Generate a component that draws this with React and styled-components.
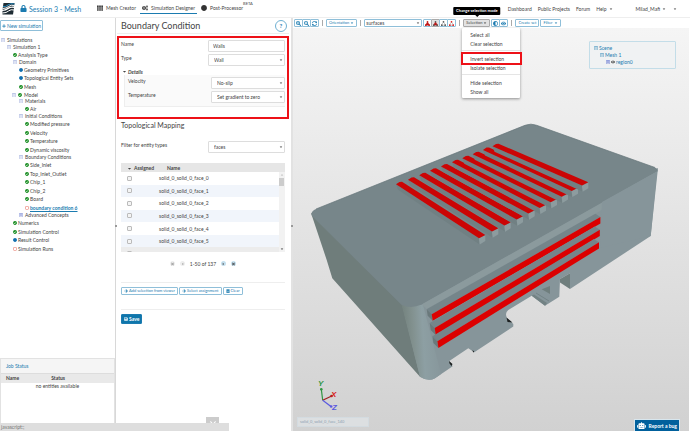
import React from 'react';
import styled, { createGlobalStyle, css } from 'styled-components';
import {
    FaLock, FaTh, FaCogs, FaCircle, FaRegCircle, FaCheckCircle, FaPlus, FaSearchPlus, FaSearchMinus,
    FaSyncAlt, FaEye, FaArrowRight, FaTrashAlt, FaSave, FaCaretDown, FaStepBackward, FaStepForward,
    FaCaretLeft, FaCaretRight, FaRobot, FaChevronDown, FaRegMinusSquare, FaRegPlusSquare, FaAdjust,
} from 'react-icons/fa';

const blue = '#1b7bb0';
const red = '#ed1118';

const GlobalStyle = createGlobalStyle`
    * {
        box-sizing: border-box;
    }

    body {
        margin: 0;
        overflow: hidden;
        background: #fff;
        color: #444;
        font: 5px/6px Lato, "Open Sans", sans-serif;
    }

    button, input, select {
        font: inherit;
        color: inherit;
    }

    button {
        cursor: pointer;
    }

    a {
        color: inherit;
        text-decoration: none;
    }
`;

const Page = styled.div`
    display: flex;
    flex-direction: column;
    height: 100vh;
`;

/* ---------- header ---------- */

const Header = styled.header`
    display: flex;
    flex: none;
    height: 18px;
    padding: 0 13px 0 2px;
    border-bottom: 1px solid #eee;
`;

const Logo = styled.svg`
    width: 13px;
    height: 13px;
    margin-top: 2px;
`;

const Session = styled.h1`
    display: flex;
    align-items: center;
    gap: 2px;
    width: 74px;
    margin: 0 0 0 5px;
    color: ${blue};
    font-size: 7px;
    font-weight: 400;
    white-space: nowrap;
`;

const Tabs = styled.nav`
    display: flex;
    flex: 1;
    gap: 2px;
    padding-left: 1px;
`;

const Tab = styled.a`
    display: flex;
    align-items: center;
    gap: 3px;
    height: 14px;
    padding: 3px 2px 0;
    border-bottom: 1px solid ${(props) => (props.$active ? blue : 'transparent')};
    white-space: nowrap;

    svg {
        width: 6px;
        height: 6px;
        color: #333;
    }
`;

const Beta = styled.span`
    margin: 2px 0 0 -4px;
    font-size: 4px;
    line-height: 4px;
`;

const Links = styled.nav`
    display: flex;
    align-items: center;
    gap: 6px;
    white-space: nowrap;
`;

const MenuLink = styled.a`
    display: flex;
    align-items: center;
    gap: 2px;
    margin-right: ${(props) => props.$gap || 0}px;

    svg {
        width: 4px;
        height: 4px;
    }
`;

/* ---------- columns ---------- */

const Columns = styled.div`
    display: grid;
    flex: 1;
    grid-template-columns: 116px 177px minmax(0, 1fr);
    min-height: 0;
`;

const grip = css`
    position: relative;

    &::after {
        position: absolute;
        top: 50%;
        right: -2px;
        width: 2px;
        height: 2px;
        background: #999;
        content: '';
    }
`;

const Sidebar = styled.aside`
    ${grip}
    display: flex;
    flex-direction: column;
    align-items: flex-start;
    min-height: 0;
    padding: 2px 0 8px;
    border-right: 1px solid #d8d8d8;
`;

const Button = styled.button`
    display: inline-flex;
    align-items: center;
    justify-content: center;
    gap: 1px;
    height: 8px;
    padding: 0 2px;
    border: 1px solid #8fbfd9;
    border-radius: 1px;
    background: #fff;
    color: ${blue};
    font-size: 4px;
    white-space: nowrap;

    svg {
        width: 4px;
        height: 4px;
    }

    ${(props) => props.$tall && css`
        height: 11px;
        padding: 0 1px;
        font-size: 5px;
    `}

    ${(props) => props.$icon && css`
        width: 9px;
        padding: 0;

        svg {
            width: 5px;
            height: 5px;
        }
    `}

    ${(props) => props.$active && css`
        border-color: #aaa;
        background: #e2e2e2;
        color: #444;
    `}

    ${(props) => props.$primary && css`
        height: 10px;
        border-color: ${blue};
        background: #0f76ab;
        color: #fff;
        font-size: 5px;
        font-weight: 700;
    `}
`;

const Tree = styled.ul`
    display: flex;
    flex: none;
    flex-direction: column;
    height: 216px;
    margin: 6px 0 0;
    padding: 0;
    list-style: none;
`;

const TreeRow = styled.li`
    display: flex;
    flex: ${(props) => (props.$folder ? 10 : 13)};
    align-items: center;
    gap: ${(props) => (props.$folder ? 2 : 1)}px;
    padding-left: ${(props) => props.$indent}px;
    white-space: nowrap;

    svg {
        width: 4px;
        height: 4px;
    }
`;

const Selected = styled.a`
    color: ${blue};
    font-weight: 700;
    text-decoration: underline;
`;

const JobPanel = styled.section`
    flex: 1;
    align-self: stretch;
    max-height: 65px;
    margin-top: auto;
    border: 1px solid #e2e2e2;
    border-bottom: 0;
`;

const JobTitle = styled.h2`
    margin: 0;
    padding: 4px 5px;
    border-bottom: 1px solid #ddd;
    background: #f5f5f5;
    color: ${blue};
    font-size: 5px;
    font-weight: 400;
`;

const JobTable = styled.table`
    width: 100%;
    border-collapse: collapse;

    th {
        width: 40%;
        padding: 1px 5px 2px;
        background: #e9e9e9;
        text-align: left;
    }

    th + th {
        width: 60%;
    }

    td {
        padding: 0;
        text-align: center;
    }
`;

/* ---------- boundary condition panel ---------- */

const Panel = styled.main`
    ${grip}
    display: flex;
    flex-direction: column;
    min-height: 0;
    padding: 0 2px 0 1px;
    border-right: 2px solid #e2e2e2;
`;

const PanelHeader = styled.div`
    display: flex;
    align-items: center;
    justify-content: space-between;
    height: 16px;
    padding: 0 2px 0 4px;
    border-bottom: 1px solid #eee;
`;

const Title = styled.h2`
    margin: 0;
    font-size: 9px;
    font-weight: 400;
    line-height: 11px;
`;

const Help = styled.button`
    width: 12px;
    height: 12px;
    padding: 0;
    border: 1px solid #6fb0d2;
    border-radius: 50%;
    background: #fff;
    color: ${blue};
    font-size: 6px;
    font-weight: 700;
    line-height: 9px;
`;

const Highlight = styled.section`
    height: 83px;
    margin-top: 2px;
    padding: 2px 2px 0;
    border: 2px solid ${red};
`;

const Field = styled.div`
    display: grid;
    grid-template-columns: minmax(0, 1fr) ${(props) => props.$control || 77}px;
    height: 14px;
`;

const Label = styled.label`
    padding-top: 1px;
`;

const control = css`
    width: 100%;
    height: 12px;
    padding: 0 5px;
    border: 1px solid #ddd;
    border-radius: 1px;
    outline: 0;
    background: #fff;
`;

const TextInput = styled.input`
    ${control}
    padding: 0 4px;
`;

const SelectWrap = styled.span`
    display: flex;
    align-items: center;
    width: 100%;
    height: 12px;

    select {
        ${control}
        appearance: none;
    }

    svg {
        width: 4px;
        height: 4px;
        margin-left: -6px;
        pointer-events: none;
    }
`;

const Details = styled.details`
    summary {
        display: flex;
        align-items: center;
        gap: 1px;
        height: 7px;
        padding-left: 1px;
        font-weight: 700;
        font-style: italic;
        list-style: none;
    }

    summary svg {
        width: 5px;
        height: 5px;
    }
`;

const DetailsBody = styled.div`
    height: 32px;
    margin-left: 3px;
    padding: 2px 0 0 3px;
    border: 1px solid #eee;
    border-width: 0 0 1px 1px;
    background: #fafafa;
`;

const Mapping = styled.section`
    padding: 2px 4px 0;
`;

const SubTitle = styled.h3`
    margin: 0 0 11px;
    font-size: 7px;
    font-weight: 400;
    line-height: 9px;
`;

const FilterField = styled(Field)`
    height: 22px;
`;

const Grid = styled.div`
    position: relative;
    height: 89px;
    overflow: hidden;
`;

const GridTable = styled.table`
    width: 100%;
    height: 97px;
    border-collapse: collapse;

    th, td {
        padding: 0;
        text-align: left;
    }

    th {
        height: 9px;
        background: #e6e6e6;
    }

    th:first-child, td:first-child {
        width: 38px;
        padding-left: 6px;
    }

    th + th {
        padding-left: 8px;
    }

    tbody tr:nth-child(even) {
        background: #f1f5fb;
    }

    tbody tr:last-child {
        background: #ececec;
    }

    th svg {
        width: 5px;
        height: 5px;
        margin-right: 2px;
        vertical-align: -1px;
    }
`;

const Check = styled.input`
    display: block;
    width: 5px;
    height: 5px;
    margin: 0;
    border: 1px solid #bbb;
    border-radius: 1px;
    appearance: none;
    background: #f4f4f4;
`;

const ScrollTrack = styled.div`
    position: absolute;
    top: 9px;
    right: 0;
    bottom: 0;
    display: flex;
    flex-direction: column;
    justify-content: space-between;
    width: 6px;
    background: #f2f2f2;

    svg {
        width: 4px;
        height: 4px;
        margin: 1px;
    }
`;

const Thumb = styled.div`
    height: 8px;
    margin: 0 1px auto 0;
    background: #ccc;
`;

const Pager = styled.div`
    display: flex;
    align-items: center;
    justify-content: center;
    gap: 5px;
    height: 31px;
    padding-bottom: 7px;
    border-bottom: 1px solid #eee;

    button {
        display: flex;
        align-items: center;
        justify-content: center;
        width: 5px;
        height: 5px;
        padding: 0;
        border: 0;
        border-radius: 50%;
        background: #c5e0ef;
    }

    button:disabled {
        background: #eee;
        color: #999;
    }

    svg {
        width: 3px;
        height: 4px;
    }
`;

const Actions = styled.div`
    display: flex;
    gap: 1px;
    height: 27px;
    padding-top: 4px;
    border-bottom: 1px solid #eee;
`;

const SaveRow = styled.div`
    padding-top: 4px;
`;

const Expand = styled.button`
    display: flex;
    align-items: center;
    justify-content: center;
    width: 13px;
    height: 14px;
    margin: auto 70px 0 auto;
    padding: 0 0 2px;
    border: 0;
    background: #ccc;
    color: #fff;

    svg {
        width: 6px;
        height: 8px;
    }
`;

/* ---------- viewer ---------- */

const Viewer = styled.section`
    display: flex;
    flex-direction: column;
    min-height: 0;
`;

const Toolbar = styled.div`
    display: flex;
    align-items: center;
    flex: none;
    gap: 3px;
    height: 10px;
    padding-left: 1px;

    select {
        height: 8px;
        padding: 0 1px;
        border-color: #8fbfd9;
    }
`;

const Group = styled.div`
    display: flex;

    > button + button {
        margin-left: -1px;
    }
`;

const LooseGroup = styled.div`
    display: flex;
    gap: 1px;
`;

const SurfaceSelect = styled.div`
    width: 58px;

    span {
        height: 8px;
    }
`;

const Divider = styled.span`
    width: 1px;
    height: 6px;
    background: #aaa;
`;

const Anchor = styled.div`
    position: relative;
    display: flex;
`;

const Tooltip = styled.div`
    position: absolute;
    bottom: 12px;
    left: 50%;
    padding: 1px 3px;
    transform: translateX(-50%);
    border-radius: 1px;
    background: #000;
    color: #fff;
    font-size: 4px;
    font-weight: 700;
    white-space: nowrap;

    &::after {
        position: absolute;
        top: 100%;
        left: 50%;
        margin-left: -2px;
        border: 2px solid transparent;
        border-top-color: #000;
        content: '';
    }
`;

const Menu = styled.ul`
    position: absolute;
    z-index: 2;
    top: 9px;
    left: -1px;
    width: 58px;
    margin: 0;
    padding: 2px 0;
    border-radius: 1px;
    background: #fff;
    box-shadow: 0 1px 3px rgba(0, 0, 0, 0.4);
    list-style: none;
`;

const MenuItem = styled.li`
    position: relative;
    padding: ${(props) => (props.$divided ? '3px 0 0' : '0')};
    margin-top: ${(props) => (props.$divided ? '2px' : '0')};
    border-top: ${(props) => (props.$divided ? '1px solid #e5e5e5' : '0')};

    button {
        display: block;
        width: 100%;
        height: 9px;
        padding: 0 8px;
        border: 0;
        background: none;
        text-align: left;
        white-space: nowrap;
    }
`;

const Marker = styled.span`
    position: absolute;
    top: 1px;
    right: -2px;
    left: -1px;
    height: 13px;
    border: 2px solid ${red};
    pointer-events: none;
`;

const Scene = styled.div`
    position: relative;
    flex: 1;
    min-height: 0;
    margin-right: 1px;
    background: linear-gradient(#f5f5f5, #d1d1d1);
`;

const Model = styled.svg`
    display: block;
    width: 100%;
    height: 100%;
`;

const SceneTree = styled.ul`
    position: absolute;
    top: 13px;
    right: 13px;
    width: 87px;
    height: 28px;
    margin: 0;
    padding: 2px 4px;
    border: 1px solid #c3dde8;
    border-radius: 1px;
    background: #f0f2f3;
    color: ${blue};
    list-style: none;

    li {
        display: flex;
        align-items: center;
        gap: 1px;
        height: 7px;
    }

    li + li {
        padding-left: 6px;
    }

    li + li + li {
        padding-left: 12px;
    }

    svg {
        width: 4px;
        height: 4px;
    }
`;

const EntityLabel = styled.div`
    position: absolute;
    bottom: 4px;
    left: 4px;
    width: 72px;
    padding: 1px 2px;
    border: 1px solid #d3dbe0;
    background: #dcdfe1;
    color: #8fa3b2;
    font-size: 4px;
`;

const Report = styled.button`
    position: absolute;
    right: 9px;
    bottom: 0;
    display: flex;
    align-items: center;
    gap: 3px;
    height: 12px;
    padding: 0 2px;
    border: 1px solid #d8e6ee;
    border-bottom: 0;
    background: #00609c;
    color: #fff;
    font-weight: 700;
    white-space: nowrap;

    svg {
        width: 9px;
        height: 7px;
    }
`;

const StatusBar = styled.div`
    position: fixed;
    bottom: 0;
    left: 0;
    width: 229px;
    height: 8px;
    padding: 1px;
    background: #dedede;
    color: #777;
`;

const treeRows = [
    [1, 'Simulations', 'open'],
    [7, 'Simulation 1', 'open'],
    [13, 'Analysis Type', 'done'],
    [13, 'Domain', 'open'],
    [19, 'Geometry Primitives', 'info'],
    [19, 'Topological Entity Sets', 'info'],
    [19, 'Mesh', 'done'],
    [12, 'Model', 'open', true],
    [19, 'Materials', 'open'],
    [25, 'Air', 'done'],
    [19, 'Initial Conditions', 'open'],
    [25, 'Modified pressure', 'done'],
    [25, 'Velocity', 'done'],
    [25, 'Temperature', 'done'],
    [25, 'Dynamic viscosity', 'done'],
    [19, 'Boundary Conditions', 'open'],
    [25, 'Side_Inlet', 'done'],
    [25, 'Top_Inlet_Outlet', 'done'],
    [25, 'Chip_1', 'done'],
    [25, 'Chip_2', 'done'],
    [25, 'Board', 'done'],
    [25, 'boundary condition 6', 'todo'],
    [19, 'Advanced Concepts', 'closed'],
    [13, 'Numerics', 'done'],
    [13, 'Simulation Control', 'done'],
    [13, 'Result Control', 'info'],
    [13, 'Simulation Runs', 'todo'],
];

const icons = {
    open: <FaRegMinusSquare color="#7d8fd0" />,
    closed: <FaRegPlusSquare color="#5468c8" />,
    done: <FaCheckCircle color="#128a1c" />,
    info: <FaCircle color="#126fae" />,
    todo: <FaRegCircle color="#e04434" />,
};

// upper tip and lower tip of every fin on the top face
const fins = [
    [402, 181.7, 485.3, 235],
    [414, 177.3, 498.3, 228.3],
    [425.3, 172.7, 510.7, 222.3],
    [436, 168.3, 523, 216.3],
    [447, 164, 534.7, 210.3],
    [458, 159.7, 546, 204.7],
    [468.3, 155.7, 557, 198.9],
    [478.7, 151.7, 568, 193.5],
    [489, 147.4, 578, 187.7],
    [498.5, 143.7, 588.3, 182.3],
];

// left and right edge of every rib on the front face
const ribs = [
    [431.7, 314.3, 320.7, 600.4, 217, 223.4],
    [434.7, 328, 335, 599.8, 229.8, 236],
    [437.4, 341.3, 348, 599, 242.3, 248.4],
];

const Dropdown = ({ id, value, label }) => (
    <SelectWrap>
        <select id={id} aria-label={label} defaultValue={value}>
            <option>{value}</option>
        </select>
        <FaCaretDown />
    </SelectWrap>
);

const PickIcon = ({ fill, dots }) => (
    <svg viewBox="0 0 12 12">
        <path d="M6 2 L11 10 H1 Z" fill={fill} stroke={fill === 'none' ? '#777' : fill} />
        <circle cx="6" cy="2" r="2" fill={dots} />
        <circle cx="2" cy="10" r="2" fill={dots} />
        <circle cx="10" cy="10" r="2" fill={dots} />
    </svg>
);

const Heatsink = () => (
    <Model viewBox="293 28 396 403" role="img" aria-label="Meshed enclosure">
        <defs>
            <linearGradient id="corner" x1="0" x2="1" y1="0" y2="-0.1">
                <stop offset="0" stopColor="#74837f" />
                <stop offset="0.25" stopColor="#82918f" />
                <stop offset="0.5" stopColor="#8d9fa3" />
                <stop offset="1" stopColor="#86959a" />
            </linearGradient>
        </defs>
        <path fill="#6f7d7b" d="M311 213 L326.7 260 L332.3 278.3 L420 376.7 L430 370 L404 300 L330 220 Z" />
        <path
            fill="#86959a"
            d="M401 300 L658 168 L650.7 236 L570 289 V273.3 L560 279 L559.3 296.7 L545 305.7 L531.7 295.7 L508.3 310
                Q504.5 313 507 318 L513.3 324 V326.5 L474.3 352.3 L468.3 348.3 L449.3 361 L452.7 366.3 L435 378.3
                Q428 382 420 376.7 Z"
        />
        <path fill="url(#corner)" d="M401.7 305 H423 L441 374 L435 378.3 Q428 382 420 376.7 Z" />
        <path
            fill="#77868a"
            d="M316 209 L525 125.3 Q531 123 536.7 125.3 L655 167.5 Q659 169 657 172 L421.7 304.5 Q411 309 401.7 305
                L312 216 Q310 211.5 316 209 Z"
        />
        <path fill="none" stroke="#66757a" strokeWidth="0.7" d="M316 209 L525 125.3 Q531 123 536.7 125.3 L655 167.5" />
        <path fill="#8b9a9d" d="M421.7 304.5 L657 171.5 L656.5 176 L595 214 L426.7 309 Z" />
        <path fill="#86959a" d="M602 202 L657 171.5 L650.7 236 L600 248 Z" />

        {fins.map(([x1, y1, x2, y2]) => (
            <g key={x1}>
                <path fill="#718083" d={`M${x1 - 6} ${y1 + 2.5} L${x2 - 6.3} ${y2 + 3.3} l0.3 6 L${x1 - 4} ${y1 + 8} Z`} />
                <path fill="#8d9c9f" d={`M${x2} ${y2} v6 l-5.6 3.4 l-0.8 -6.2 Z`} />
                <path fill="#cb0505" d={`M${x1 - 6} ${y1 + 2.5} L${x1 - 2.5} ${y1 + 0.2} L${x1} ${y1} L${x2} ${y2} L${x2 - 6.3} ${y2 + 3.3} Z`} />
            </g>
        ))}

        {ribs.map(([x, top, bottom, x2, top2, bottom2]) => (
            <g key={x}>
                <path fill="#75858a" d={`M${x - 5} ${top - 5} L${x2 - 5} ${top2 - 3.3} L${x2} ${top2} L${x} ${top} Z`} />
                <path fill="#6a797b" d={`M${x - 5} ${top - 5} L${x} ${top} L${x + 1} ${bottom} L${x - 4} ${bottom - 5} Z`} />
                <path fill="#dc0000" d={`M${x} ${top} L${x2} ${top2} V${bottom2} L${x + 1} ${bottom} Z`} />
            </g>
        ))}

        <path fill="#6f7e7d" d="M560 279 L570 273.3 V289 L560 282.5 Z" />
        <path fill="#6f7e7d" d="M541.7 289.3 L550 286 V294 Z" />
        <path fill="#738284" d="M531.7 295.7 L534 294.5 L547 303 L545 305.7 Z" />
        <path stroke="#6c7b7d" strokeWidth="0.7" d="M536 293 L549 301" />
        <path fill="#1c2020" d="M449 361 L452.5 364 L451.5 366 L449.5 363.5 Z M472 350.5 L474 351 V352.8 Z M506.5 317.5 L512.5 322.5 L507.5 322 Z" />

        <g fontFamily="Liberation Sans, Arial, sans-serif" fontSize="8" fontWeight="700" fontStyle="italic">
            <path stroke="#2f9540" strokeWidth="1.2" d="M322.7 400.3 L321.3 389" />
            <circle cx="321.3" cy="389.3" r="1.3" fill="#2f9540" />
            <path stroke="#a02020" strokeWidth="1.2" d="M322.7 400.3 L331.7 396" />
            <circle cx="331.5" cy="396" r="1.3" fill="#b02020" />
            <path stroke="#5a5ae0" strokeWidth="1.2" d="M322.7 400.3 L331.3 406.7" />
            <circle cx="331.2" cy="406.5" r="1.3" fill="#5a5ae0" />
            <text x="318" y="386" fill="#2f9540">Y</text>
            <text x="331" y="397" fill="#d81a1a">X</text>
            <text x="332" y="410" fill="#5a5ae0">Z</text>
        </g>
    </Model>
);

const SelectionMenu = () => (
    <Menu>
        <MenuItem><button>Select all</button></MenuItem>
        <MenuItem><button>Clear selection</button></MenuItem>
        <MenuItem $divided>
            <button>Invert selection</button>
            <Marker />
        </MenuItem>
        <MenuItem><button>Isolate selection</button></MenuItem>
        <MenuItem $divided><button>Hide selection</button></MenuItem>
        <MenuItem><button>Show all</button></MenuItem>
    </Menu>
);

const TopBar = () => (
    <Header>
        <Logo viewBox="0 0 26 26">
            <path fill="#1d2b33" d="M3 2 H25 L24 9 Q14 8 9 13 Q5 16 1 15 Z" />
            <path fill="#1d2b33" d="M1 18 Q8 18 13 14 Q18 10 24 12 L22 25 H1 Z" />
            <path fill="none" stroke="#2a8fc4" strokeWidth="2" d="M2 9 Q8 10 12 6 Q17 2 25 4" />
            <path fill="none" stroke="#fff" strokeWidth="2" d="M1 13 Q9 13 13 9 Q18 5 25 7 M1 22 Q9 22 13 18 Q18 14 24 16" />
        </Logo>
        <Session><FaLock /> Session 3 - Mesh</Session>
        <Tabs>
            <Tab href="#mesh"><FaTh /> Mesh Creator</Tab>
            <Tab href="#simulation" $active><FaCogs /> Simulation Designer</Tab>
            <Tab href="#post"><FaCircle /> Post-Processor</Tab>
            <Beta>BETA</Beta>
        </Tabs>
        <Links>
            <a href="#dashboard">Dashboard</a>
            <a href="#projects">Public Projects</a>
            <a href="#forum">Forum</a>
            <MenuLink href="#help" $gap={17}>Help <FaCaretDown /></MenuLink>
            <MenuLink href="#user" $gap={1}>Milad_Mafi <FaCaretDown /></MenuLink>
            <MenuLink href="#more" aria-label="More"><FaCaretDown /></MenuLink>
        </Links>
    </Header>
);

const App = () => {
    return (
        <Page>
            <GlobalStyle />
            <TopBar />
            <Columns>
                <Sidebar>
                    <Button $tall><FaPlus /> New simulation</Button>
                    <Tree>
                        {treeRows.map(([indent, name, state, done]) => (
                            <TreeRow key={name} $indent={indent} $folder={state === 'open' || state === 'closed'}>
                                {icons[state]}
                                {done && icons.done}
                                {name === 'boundary condition 6' ? <Selected href="#bc6">{name}</Selected> : name}
                            </TreeRow>
                        ))}
                    </Tree>
                    <JobPanel>
                        <JobTitle>Job Status</JobTitle>
                        <JobTable>
                            <thead>
                                <tr><th>Name</th><th>Status</th></tr>
                            </thead>
                            <tbody>
                                <tr><td colSpan="2">no entities available</td></tr>
                            </tbody>
                        </JobTable>
                    </JobPanel>
                </Sidebar>

                <Panel>
                    <PanelHeader>
                        <Title>Boundary Condition</Title>
                        <Help>?</Help>
                    </PanelHeader>
                    <Highlight>
                        <Field>
                            <Label htmlFor="name">Name</Label>
                            <TextInput id="name" defaultValue="Walls" />
                        </Field>
                        <Field>
                            <Label htmlFor="type">Type</Label>
                            <Dropdown id="type" value="Wall" />
                        </Field>
                        <Details open>
                            <summary><FaCaretDown /> Details</summary>
                            <DetailsBody>
                                <Field $control={74}>
                                    <Label htmlFor="velocity">Velocity</Label>
                                    <Dropdown id="velocity" value="No-slip" />
                                </Field>
                                <Field $control={74}>
                                    <Label htmlFor="temperature">Temperature</Label>
                                    <Dropdown id="temperature" value="Set gradient to zero" />
                                </Field>
                            </DetailsBody>
                        </Details>
                    </Highlight>
                    <Mapping>
                        <SubTitle>Topological Mapping</SubTitle>
                        <FilterField>
                            <Label htmlFor="filter">Filter for entity types</Label>
                            <Dropdown id="filter" value="faces" />
                        </FilterField>
                        <Grid>
                            <GridTable>
                                <thead>
                                    <tr><th><FaCaretDown />Assigned</th><th>Name</th></tr>
                                </thead>
                                <tbody>
                                    {[0, 1, 2, 3, 4, 5, 6].map((n) => (
                                        <tr key={n}>
                                            <td><Check type="checkbox" aria-label={`Assign face ${n}`} /></td>
                                            <td>{`solid_0_solid_0_face_${n}`}</td>
                                        </tr>
                                    ))}
                                </tbody>
                            </GridTable>
                            <ScrollTrack>
                                <FaCaretDown color="#bbb" transform="rotate(180)" />
                                <Thumb />
                                <FaCaretDown />
                            </ScrollTrack>
                        </Grid>
                        <Pager>
                            <button disabled aria-label="First page"><FaStepBackward /></button>
                            <button disabled aria-label="Previous page"><FaCaretLeft /></button>
                            <span>1-50 of 137</span>
                            <button aria-label="Next page"><FaCaretRight /></button>
                            <button aria-label="Last page"><FaStepForward /></button>
                        </Pager>
                        <Actions>
                            <Button><FaArrowRight /> Add selection from viewer</Button>
                            <Button><FaArrowRight /> Select assignment</Button>
                            <Button><FaTrashAlt /> Clear</Button>
                        </Actions>
                        <SaveRow>
                            <Button $primary><FaSave /> Save</Button>
                        </SaveRow>
                    </Mapping>
                    <Expand aria-label="Expand"><FaChevronDown /></Expand>
                </Panel>

                <Viewer>
                    <Toolbar>
                        <Group>
                            <Button $icon aria-label="Zoom in"><FaSearchPlus /></Button>
                            <Button $icon aria-label="Zoom out"><FaSearchMinus /></Button>
                            <Button $icon aria-label="Reset view"><FaSyncAlt /></Button>
                        </Group>
                        <Divider />
                        <Button>Orientation <FaCaretDown /></Button>
                        <Divider />
                        <LooseGroup>
                            <SurfaceSelect><Dropdown label="Entity type" value="surfaces" /></SurfaceSelect>
                            <Group>
                                <Button $icon aria-label="Pick volumes"><PickIcon fill="#c01818" dots="#c01818" /></Button>
                                <Button $icon aria-label="Pick faces" $active><PickIcon fill="#c01818" dots="#555" /></Button>
                                <Button $icon aria-label="Pick edges"><PickIcon fill="none" dots="#555" /></Button>
                                <Button $icon aria-label="Pick nodes"><PickIcon fill="none" dots="#e01818" /></Button>
                            </Group>
                        </LooseGroup>
                        <Divider />
                        <LooseGroup>
                            <Anchor>
                                <Button $active>Selection <FaCaretDown /></Button>
                                <Tooltip role="tooltip">Change selection mode</Tooltip>
                                <SelectionMenu />
                            </Anchor>
                            <Group>
                                <Button $icon aria-label="Invert visibility"><FaAdjust /></Button>
                                <Button $icon aria-label="Show"><FaEye /></Button>
                            </Group>
                        </LooseGroup>
                        <Divider />
                        <LooseGroup>
                            <Button>Create set</Button>
                            <Button>Filter <FaCaretDown /></Button>
                        </LooseGroup>
                    </Toolbar>
                    <Scene>
                        <Heatsink />
                        <SceneTree>
                            <li><FaRegMinusSquare />Scene</li>
                            <li><FaRegMinusSquare />Mesh 1</li>
                            <li><FaRegPlusSquare color="#3a50c8" /><FaEye color="#333" />region0</li>
                        </SceneTree>
                        <EntityLabel>solid_0_solid_0_face_140</EntityLabel>
                        <Report><FaRobot /> Report a bug</Report>
                    </Scene>
                </Viewer>
            </Columns>
            <StatusBar>javascript:;</StatusBar>
        </Page>
    );
};

export default App;
